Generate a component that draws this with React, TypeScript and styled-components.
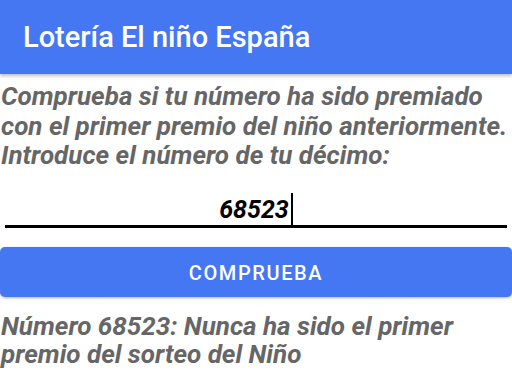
import * as React from "react";
import styled, { createGlobalStyle } from "styled-components";

const GlobalStyle = createGlobalStyle`
  html, body {
    margin: 0;
    padding: 0;
    background: #ffffff;
    font-family: Roboto, "Liberation Sans", sans-serif;
  }
`;

const Screen = styled.div`
  width: 512px;
  height: 379px;
  overflow: hidden;
  background: #ffffff;
`;

const AppBar = styled.header`
  height: 74px;
  background: #4577f2;
  display: flex;
  align-items: center;
  padding: 0 23px;
  box-shadow: 0 2px 3px rgba(0, 0, 0, 0.25);
  box-sizing: border-box;
`;

const Title = styled.h1`
  margin: 0;
  color: #ffffff;
  font-size: 29px;
  font-weight: 500;
`;

const Body = styled.main`
  display: flex;
  flex-direction: column;
  padding: 8.4px 0 0;
`;

const Label = styled.p`
  margin: 0;
  padding: 0 0 0 1px;
  color: #666666;
  font-size: 26px;
  font-weight: 700;
  font-style: italic;
  line-height: 29.5px;
`;

const InputRow = styled.div`
  margin: 10px 5px 0 5px;
  height: 44px;
  border-bottom: 3px solid #000000;
  display: flex;
  justify-content: center;
  align-items: flex-end;
  box-sizing: content-box;
`;

const Value = styled.span`
  font-size: 25px;
  font-weight: 700;
  font-style: italic;
  color: #000000;
  padding-bottom: 1px;
`;

const Caret = styled.span`
  display: inline-block;
  width: 2px;
  height: 33px;
  background: #000000;
  margin-left: 2px;
  margin-bottom: -1px;
`;

const Button = styled.button`
  margin: 19px 0 0;
  height: 50px;
  border: none;
  border-radius: 5px;
  background: #4577f2;
  color: #ffffff;
  font-family: Roboto, "Liberation Sans", sans-serif;
  font-size: 20px;
  font-weight: 500;
  letter-spacing: 1.6px;
  box-shadow: 0 1px 3px rgba(0, 0, 0, 0.3);
  padding: 2px 0 0;
`;

const Result = styled(Label)`
  margin-top: 15px;
  line-height: 28px;
`;

export default function App() {
  return (
    <Screen>
      <GlobalStyle />
      <AppBar>
        <Title>Lotería El niño España</Title>
      </AppBar>
      <Body>
        <Label>
          Comprueba si tu número ha sido premiado con el primer premio del niño
          anteriormente.
        </Label>
        <Label>Introduce el número de tu décimo:</Label>
        <InputRow>
          <Value>68523</Value>
          <Caret />
        </InputRow>
        <Button>COMPRUEBA</Button>
        <Result>Número 68523: Nunca ha sido el primer premio del sorteo del Niño</Result>
      </Body>
    </Screen>
  );
}
